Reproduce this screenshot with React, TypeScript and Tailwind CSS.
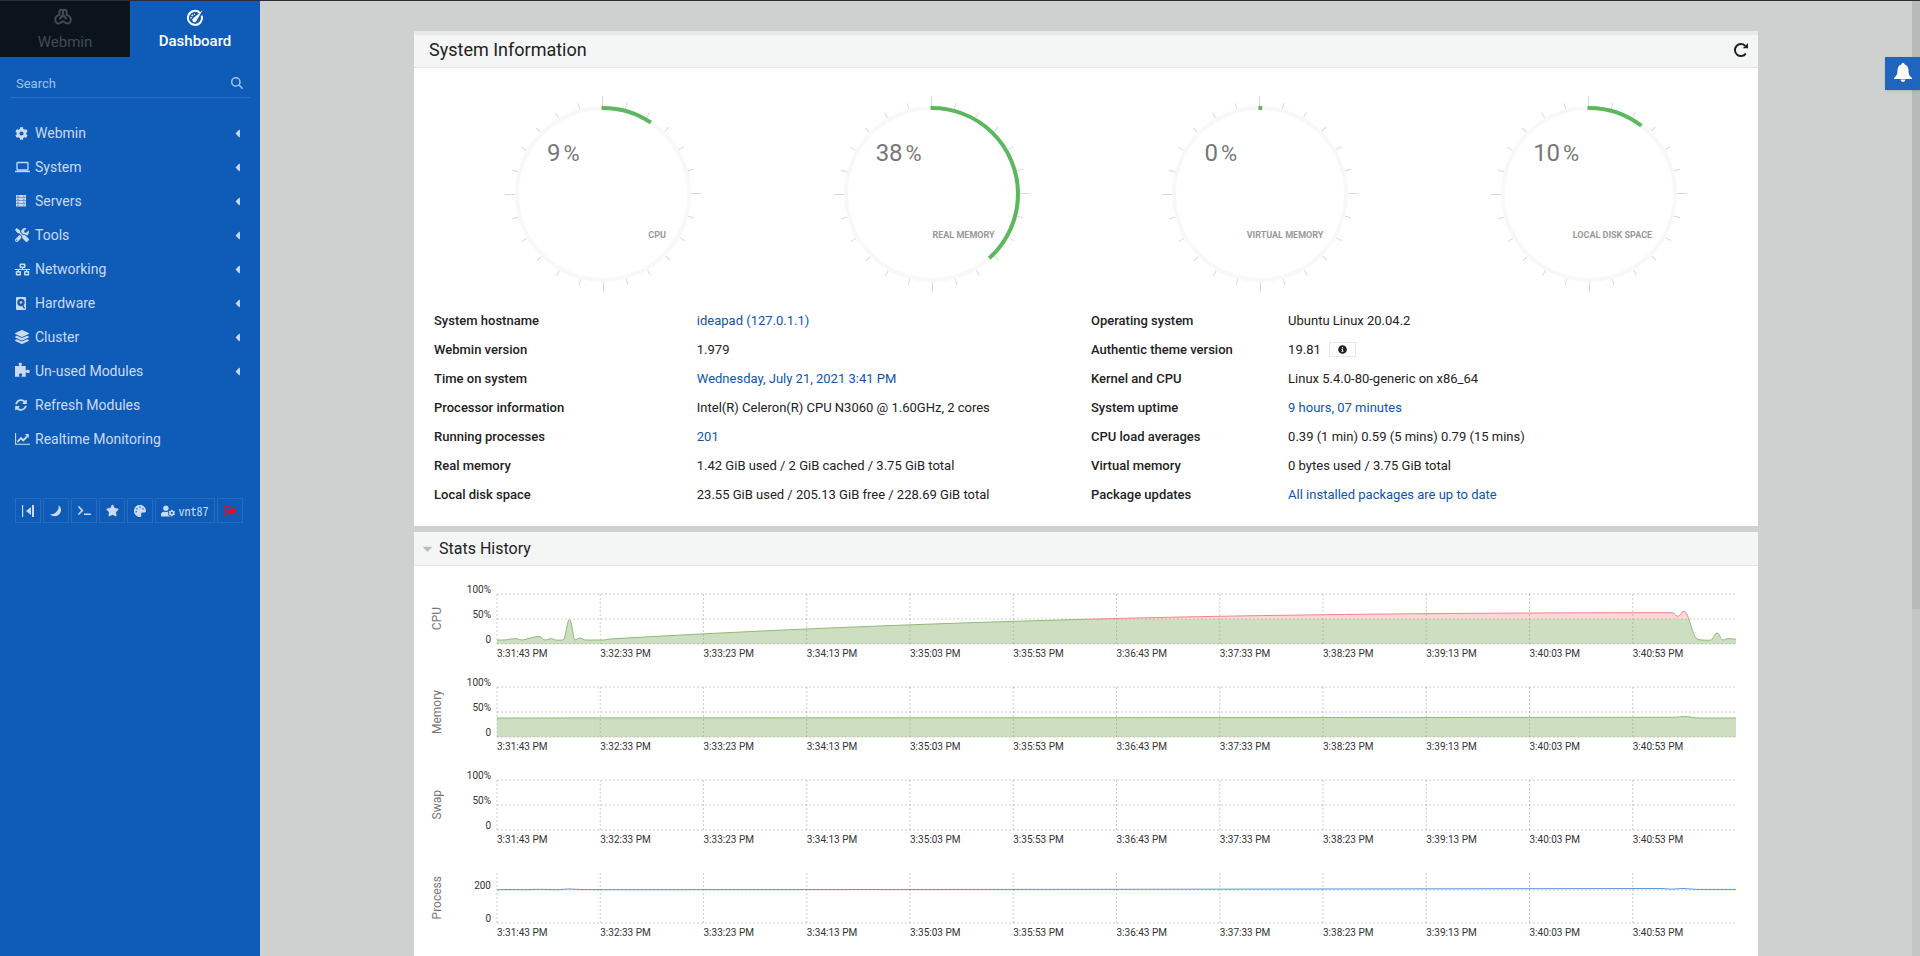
import type { ReactNode } from 'react';
import {
  FaCaretDown,
  FaCaretLeft,
  FaCog,
  FaInfoCircle,
  FaLayerGroup,
  FaNetworkWired,
  FaPalette,
  FaStar,
  FaSyncAlt,
  FaTerminal,
  FaTools,
  FaUserCog,
} from 'react-icons/fa';
import { FaMagnifyingGlass } from 'react-icons/fa6';

const WebminLogo = () => (
  <svg width="22" height="18" viewBox="0 0 22 18" fill="none" stroke="currentColor" strokeWidth="2" strokeLinejoin="round" strokeLinecap="round">
    <path d="M9 7V3.200C9 2.200 8.200 1.800 7.200 1.800 6 1.800 5.400 2.600 5.400 3.800V7C2.800 7.600 1.200 9.400 1.200 11.800c0 2.600 2 4.200 4 3.600C6.800 15 7.400 13.600 9 13.600s2.200 1.400 3.800 1.800c2 .6 4-1 4-3.600 0-2.400-1.600-4.200-4.200-4.800V3.800c0-1.200-.6-2-1.800-2C9.800 1.800 9 2.200 9 3.200" />
    <path d="M9 7 6 10.500M9 7l3 3.500" />
  </svg>
);

const GaugeIcon = () => (
  <svg width="18" height="18" viewBox="0 0 18 18" fill="none" stroke="currentColor">
    <path d="M14 4A7 7 0 1 0 15.600 6.600" strokeWidth="2" />
    <path d="M5 9.500a4 4 0 0 1 4-4.200" strokeWidth="1.400" strokeDasharray="1.600 1" />
    <path d="M16.600 1.200 7.200 9.200a2.200 2.200 0 1 0 3.400 2.400z" fill="currentColor" stroke="none" />
  </svg>
);

const LaptopIcon = () => (
  <svg width="15" height="12" viewBox="0 0 15 12" fill="none" stroke="currentColor">
    <rect x="2" y="1.500" width="11" height="7.500" rx="0.800" strokeWidth="1.300" />
    <path d="M0 10.500h15" strokeWidth="1.400" />
  </svg>
);

const ServersIcon = () => (
  <svg width="12" height="12" viewBox="0 0 12 12">
    {[0, 3, 6, 9].map((y) => (
      <g key={y}>
        <rect x="1" y={y} width="10" height="2.500" fill="currentColor" />
        <path d={`M2 ${y + 1.2}h2M8 ${y + 1.2}h1.500`} stroke="#0e5bb8" strokeWidth="0.600" />
      </g>
    ))}
  </svg>
);

const DiskIcon = () => (
  <svg width="12" height="13" viewBox="0 0 12 13">
    <rect x="1" width="10" height="13" rx="1" fill="currentColor" />
    <circle cx="6" cy="5.500" r="3.700" fill="#0e5bb8" />
    <circle cx="6" cy="5.500" r="1.300" fill="currentColor" />
    <path d="M6.500 6.500 9.500 11.500" stroke="#0e5bb8" strokeWidth="1.400" />
  </svg>
);

const PuzzleIcon = () => (
  <svg width="15" height="18" viewBox="0 0 15 18" fill="currentColor">
    <path d="M0 4h4.300C4.600 3.300 3.600 3 3.600 2.100 3.600 1.300 4.300.8 5.200.8s1.700.5 1.700 1.300c0 .9-1 1.200-.7 1.900h4.500v4.300c.8.3 1.400-.6 2.400-.6 1 0 1.600.8 1.600 1.700s-.6 1.700-1.600 1.700c-1 0-1.600-.9-2.400-.6v4.300H6.600c-.3-1 .6-1.200.6-2.100 0-.8-.7-1.300-1.600-1.300s-1.700.5-1.700 1.300c0 .9 1 1.100.6 2.100H0z" />
  </svg>
);

const TrendIcon = () => (
  <svg width="15" height="12" viewBox="0 0 15 12" fill="none" stroke="currentColor">
    <path d="M.6 0v11.300H15" strokeWidth="1.100" />
    <path d="M2.500 8.800 6 5.200l2.200 2.200 4-4" strokeWidth="1.900" />
    <path d="M9.800 1h4v4z" fill="currentColor" stroke="none" />
  </svg>
);

const CollapseIcon = () => (
  <svg width="12" height="12" viewBox="0 0 12 12" fill="currentColor">
    <path d="M0 0h1.200v12H0zM10 0h2v12h-2zM9 2v8L4 6z" />
  </svg>
);

const MoonIcon = () => (
  <svg width="12" height="12" viewBox="0 0 12 12" fill="currentColor">
    <path d="M8.500 0A6.300 6.300 0 1 1 0 9.200 7.500 7.500 0 0 0 5.800 7.400 7.500 7.500 0 0 0 8.500 0z" />
  </svg>
);

const SignOutIcon = () => (
  <svg width="13" height="12" viewBox="0 0 13 12">
    <path d="M5 1.600H2.500A1.500 1.500 0 0 0 1 3v6a1.500 1.500 0 0 0 1.500 1.400H5" fill="none" stroke="currentColor" strokeWidth="1.400" />
    <path d="M4 4h3.500V1.500L12.800 6 7.500 10.500V8H4z" fill="currentColor" />
  </svg>
);

const ReloadIcon = () => (
  <svg width="16" height="16" viewBox="0 0 16 16" fill="none" stroke="currentColor">
    <path d="M12.800 11.600A6 6 0 1 1 12.200 3.800" strokeWidth="2" />
    <path d="M15 1v5.200H9.600z" fill="currentColor" stroke="none" />
  </svg>
);

const BellIcon = () => (
  <svg width="18" height="19" viewBox="0 0 18 19" fill="currentColor">
    <path d="M9 0c1 0 1.600.7 1.600 1.500C13.300 2.200 14.500 4.500 14.500 7.500c0 3.800 1 5.500 3.500 7.500v1H0v-1c2.500-2 3.500-3.700 3.500-7.500 0-3 1.200-5.300 3.900-6C7.400.7 8 0 9 0zM6.600 16.500h4.800a2.400 2.400 0 0 1-4.800 0z" />
  </svg>
);

type MenuItem = { label: string; icon: ReactNode; expandable?: boolean };

const menu: MenuItem[] = [
  { label: 'Webmin', icon: <FaCog size={13} />, expandable: true },
  { label: 'System', icon: <LaptopIcon />, expandable: true },
  { label: 'Servers', icon: <ServersIcon />, expandable: true },
  { label: 'Tools', icon: <FaTools size={14} />, expandable: true },
  { label: 'Networking', icon: <FaNetworkWired size={15} />, expandable: true },
  { label: 'Hardware', icon: <DiskIcon />, expandable: true },
  { label: 'Cluster', icon: <FaLayerGroup size={14} />, expandable: true },
  { label: 'Un-used Modules', icon: <PuzzleIcon />, expandable: true },
  { label: 'Refresh Modules', icon: <FaSyncAlt size={12} /> },
  { label: 'Realtime Monitoring', icon: <TrendIcon /> },
];

const shortcuts = [
  { label: 'Collapse menu', icon: <CollapseIcon /> },
  { label: 'Night mode', icon: <MoonIcon /> },
  { label: 'Terminal', icon: <FaTerminal size={13} /> },
  { label: 'Favorites', icon: <FaStar size={13} /> },
  { label: 'Theme', icon: <FaPalette size={12} /> },
];

const gauges = [
  { label: 'CPU', value: 9 },
  { label: 'REAL MEMORY', value: 38 },
  { label: 'VIRTUAL MEMORY', value: 0 },
  { label: 'LOCAL DISK SPACE', value: 10 },
];

type InfoRow = { name: string; value: string; link?: boolean; info?: boolean };

const leftInfo: InfoRow[] = [
  { name: 'System hostname', value: 'ideapad (127.0.1.1)', link: true },
  { name: 'Webmin version', value: '1.979' },
  { name: 'Time on system', value: 'Wednesday, July 21, 2021 3:41 PM', link: true },
  { name: 'Processor information', value: 'Intel(R) Celeron(R) CPU N3060 @ 1.60GHz, 2 cores' },
  { name: 'Running processes', value: '201', link: true },
  { name: 'Real memory', value: '1.42 GiB used / 2 GiB cached / 3.75 GiB total' },
  { name: 'Local disk space', value: '23.55 GiB used / 205.13 GiB free / 228.69 GiB total' },
];

const rightInfo: InfoRow[] = [
  { name: 'Operating system', value: 'Ubuntu Linux 20.04.2' },
  { name: 'Authentic theme version', value: '19.81', info: true },
  { name: 'Kernel and CPU', value: 'Linux 5.4.0-80-generic on x86_64' },
  { name: 'System uptime', value: '9 hours, 07 minutes', link: true },
  { name: 'CPU load averages', value: '0.39 (1 min) 0.59 (5 mins) 0.79 (15 mins)' },
  { name: 'Virtual memory', value: '0 bytes used / 3.75 GiB total' },
  { name: 'Package updates', value: 'All installed packages are up to date', link: true },
];

const times = [
  '3:31:43 PM', '3:32:33 PM', '3:33:23 PM', '3:34:13 PM', '3:35:03 PM', '3:35:53 PM',
  '3:36:43 PM', '3:37:33 PM', '3:38:23 PM', '3:39:13 PM', '3:40:03 PM', '3:40:53 PM',
];

const cpuLine =
  'M0 46L6 46C11 46 14 44.500 20 44.700C22 45 23 46 25 46C28 46 30 44.500 33 44.300C37 43.500 39 42.300 42 42.300C45 42.500 45 46 48 46C51 46 51 44.700 54 44.700C57 44.700 57 46.200 60 46.200L66 46C69 45 70 25.500 72.500 25.500C75 25.500 76 46 78 46C80 46 80 44 83 44C86 44.500 86 46 89 46L107 46L113 45C300 34 480 28 619 24.500S950 18.700 1175 18.700C1178 18.700 1178 22.300 1181 22.300C1184 22 1184 17.300 1187 17.300C1192 17.300 1195 44 1201 45.500C1205 46.400 1210 46.200 1213 46.200C1217 46 1217 39 1220 39C1223 39 1223 46 1226 46C1228 46 1229 44.500 1232 44.500L1239 45.300';
const memoryLine = 'M0 31L619 30.700L1175 30.300C1182 30.300 1184 29.500 1187 29.500C1192 29.500 1197 31 1202 31L1239 31';
const processLine =
  'M0 16.700L12 16.500L24 16.700L42 16.300L60 16.700L72 16L84 16.500L110 16.700L619 16.300L1165 15.500L1174 16.200L1186 15.500L1200 16.400L1239 16.400';

type Chart = { title: string; line?: string; kind?: 'load' | 'area' | 'plain'; ticks: { label: string; y: number }[] };

const percentTicks = [
  { label: '100%', y: 0 },
  { label: '50%', y: 25 },
  { label: '0', y: 50 },
];

const charts: Chart[] = [
  { title: 'CPU', line: cpuLine, kind: 'load', ticks: percentTicks },
  { title: 'Memory', line: memoryLine, kind: 'area', ticks: percentTicks },
  { title: 'Swap', ticks: percentTicks },
  { title: 'Process', line: processLine, kind: 'plain', ticks: [{ label: '200', y: 17 }, { label: '0', y: 50 }] },
];

function Sidebar() {
  return (
    <aside className="w-[260px] shrink-0 bg-[#0e5bb8] text-[#cbdaf2]">
      <nav className="flex h-[56px] text-[15px] leading-5">
        <button className="flex flex-1 flex-col items-center bg-[#0b131c] pt-[7px] text-[#444a51]">
          <WebminLogo />
          <span className="mt-[6px]">Webmin</span>
        </button>
        <button className="flex flex-1 flex-col items-center pt-[8px] font-medium text-white">
          <GaugeIcon />
          <span className="mt-[4px]">Dashboard</span>
        </button>
      </nav>
      <label className="mx-[10px] mt-[11px] flex h-[30px] items-center border-b border-[#2b6fc3] pl-[6px] pr-[7px]">
        <input
          type="text"
          aria-label="Search"
          placeholder="Search"
          className="min-w-0 flex-1 bg-transparent pt-[2px] text-[13px] outline-none placeholder:text-[#a3c0e8]"
        />
        <FaMagnifyingGlass size={12} className="text-[#a3c0e8]" />
      </label>
      <ul className="mt-[18px]">
        {menu.map((item) => (
          <li key={item.label}>
            <a href="#" className="flex h-[34px] items-center pl-[15px] pr-4 text-[14px]">
              <span className="flex w-5 shrink-0">{item.icon}</span>
              <span className="flex-1">{item.label}</span>
              {item.expandable && <FaCaretLeft size={13} />}
            </a>
          </li>
        ))}
      </ul>
      <div className="mt-[42px] flex gap-[2px] pl-[15px]">
        {shortcuts.map((s) => (
          <button key={s.label} aria-label={s.label} className="flex h-[25px] w-[26px] items-center justify-center border border-[#266bc0]">
            {s.icon}
          </button>
        ))}
        <button className="flex h-[25px] w-[60px] items-center justify-center gap-[3px] border border-[#266bc0] font-['Noto_Sans_Mono_CJK_SC','Liberation_Mono',monospace] text-[12px]">
          <FaUserCog size={14} />
          vnt87
        </button>
        <button aria-label="Sign out" className="flex h-[25px] w-[26px] items-center justify-center border border-[#266bc0] text-[#f00a14]">
          <SignOutIcon />
        </button>
      </div>
    </aside>
  );
}

function Gauge({ label, value }: { label: string; value: number }) {
  return (
    <div className="flex justify-center">
      <div className="relative">
        <svg width="197" height="197" viewBox="-98 -98 197 197">
          {Array.from({ length: 24 }, (_, i) => (
            <rect key={i} x="-1" y={i % 6 ? -94 : -98} width="1" height={i % 6 ? 6 : 10} fill="#d9d9d9" transform={`rotate(${i * 15})`} />
          ))}
          <circle r="86" fill="none" stroke="#f8f8f8" strokeWidth="4" />
          <circle
            r="86"
            fill="none"
            stroke="#5cb85c"
            strokeWidth="4"
            pathLength="100"
            strokeDasharray={`${value + 0.7} 100`}
            transform="rotate(-91)"
          />
        </svg>
        <div className="absolute left-[42px] top-[43px] flex items-baseline gap-[3px] leading-7 text-[#777]">
          <span className="text-[24px]">{value}</span>
          <span className="text-[22px]">%</span>
        </div>
        <div className="absolute right-[36px] top-[133px] whitespace-nowrap text-[9px] font-bold leading-3 text-[#999]">{label}</div>
      </div>
    </div>
  );
}

function InfoTable({ rows, nameWidth }: { rows: InfoRow[]; nameWidth: string }) {
  return (
    <table className="w-full table-fixed text-left text-[13px] text-[#222]">
      <tbody>
        {rows.map((row) => (
          <tr key={row.name} className="h-[29px]">
            <th scope="row" className={`${nameWidth} px-[5px] font-medium`}>{row.name}</th>
            <td className="px-[5px]">
              <span className="flex items-center gap-2">
                {row.link ? <a href="#" className="text-[#0d55ae]">{row.value}</a> : row.value}
                {row.info && (
                  <button aria-label="Theme details" className="flex h-[15px] w-[27px] items-center justify-center border border-[#e6e6e6]">
                    <FaInfoCircle size={9} />
                  </button>
                )}
              </span>
            </td>
          </tr>
        ))}
      </tbody>
    </table>
  );
}

function Plot({ chart }: { chart: Chart }) {
  const dash = { stroke: '#000', strokeOpacity: 0.2, strokeDasharray: '2 2' };
  return (
    <svg className="block h-[50px] w-full overflow-visible" viewBox="0 0 1239 50" preserveAspectRatio="none" fill="none">
      {chart.ticks.map((t) => (
        <line key={t.label} x1="0" x2="1239" y1={t.y} y2={t.y} {...dash} />
      ))}
      {times.map((t, i) => (
        <line key={t} x1={i * 103.25} x2={i * 103.25} y1="0" y2="50" {...dash} />
      ))}
      {chart.kind === 'load' && (
        <>
          <clipPath id="over"><rect y="-1" width="1239" height="26" /></clipPath>
          <clipPath id="under"><rect y="25" width="1239" height="26" /></clipPath>
          <g clipPath="url(#over)">
            <path d={`${chart.line}V50H0Z`} fill="#ec7f7c" fillOpacity="0.3" />
            <path d={chart.line} stroke="#ef8683" />
          </g>
          <g clipPath="url(#under)">
            <path d={`${chart.line}V50H0Z`} fill="#82af61" fillOpacity="0.4" />
            <path d={chart.line} stroke="#8fba76" />
          </g>
        </>
      )}
      {chart.kind === 'area' && (
        <>
          <path d={`${chart.line}V50H0Z`} fill="#82af61" fillOpacity="0.4" />
          <path d={chart.line} stroke="#8fba76" />
        </>
      )}
      {chart.kind === 'plain' && <path d={chart.line} stroke="#5b95e0" />}
    </svg>
  );
}

function StatChart({ chart }: { chart: Chart }) {
  return (
    <section className="flex h-[93px] pr-[22px]">
      <div className="flex h-[50px] w-[46px] items-center justify-center">
        <h3 className="rotate-180 text-[12px] leading-4 text-[#777] [writing-mode:vertical-rl]">{chart.title}</h3>
      </div>
      <div className="relative w-[37px] text-right text-[10px] leading-3 text-[#333]">
        {chart.ticks.map((t) => (
          <span key={t.label} className="absolute right-[6px] -translate-y-[10px]" style={{ top: t.y }}>
            {t.label}
          </span>
        ))}
      </div>
      <div className="min-w-0 flex-1">
        <Plot chart={chart} />
        <div className="mt-1 grid grid-cols-12 whitespace-nowrap text-[10px] leading-3 text-[#333]">
          {times.map((t) => (
            <span key={t}>{t}</span>
          ))}
        </div>
      </div>
    </section>
  );
}

export default function App() {
  return (
    <div className="flex h-screen overflow-hidden border-t border-[#2b2b3b] bg-[#cfd1d0] font-['Roboto',sans-serif]">
      <Sidebar />
      <main className="min-w-0 flex-1 overflow-y-auto px-8 pt-[30px] [scrollbar-width:none]">
        <div className="mx-auto flex max-w-[1344px] flex-col gap-[6px]">
          <section className="border-t-4 border-[#e8e9e8] bg-white">
            <header className="flex h-[33px] items-center justify-between border-b border-[#e3e5e4] bg-[#f4f6f5] pb-[2px] pl-[15px] pr-[9px] text-[#222]">
              <h2 className="text-[18px] leading-6">System Information</h2>
              <button aria-label="Reload">
                <ReloadIcon />
              </button>
            </header>
            <div className="grid grid-cols-4 pl-[25px] pr-1 pt-[28px]">
              {gauges.map((g) => (
                <Gauge key={g.label} label={g.label} value={g.value} />
              ))}
            </div>
            <div className="grid grid-cols-2 px-[15px] pb-[17px] pt-[13px]">
              <InfoTable rows={leftInfo} nameWidth="w-[40%]" />
              <InfoTable rows={rightInfo} nameWidth="w-[30%]" />
            </div>
          </section>
          <section className="bg-white">
            <header className="border-b border-[#e3e5e4] bg-[#f4f6f5] text-[#222]">
              <button className="flex h-[33px] w-full items-center gap-1 pl-[6px]">
                <FaCaretDown size={15} className="text-[#bbb]" />
                <h2 className="text-[16px]">Stats History</h2>
              </button>
            </header>
            <div className="pt-[28px]">
              {charts.map((c) => (
                <StatChart key={c.title} chart={c} />
              ))}
            </div>
          </section>
        </div>
      </main>
      <div className="w-2 shrink-0 bg-[#c4c6c5]">
        <div className="h-[608px] bg-[#b9b9b9]" />
      </div>
      <button aria-label="Notifications" className="fixed right-0 top-[57px] flex h-[33px] w-[35px] items-center justify-center bg-[#2065bd] pb-[2px] text-white shadow">
        <BellIcon />
      </button>
    </div>
  );
}
